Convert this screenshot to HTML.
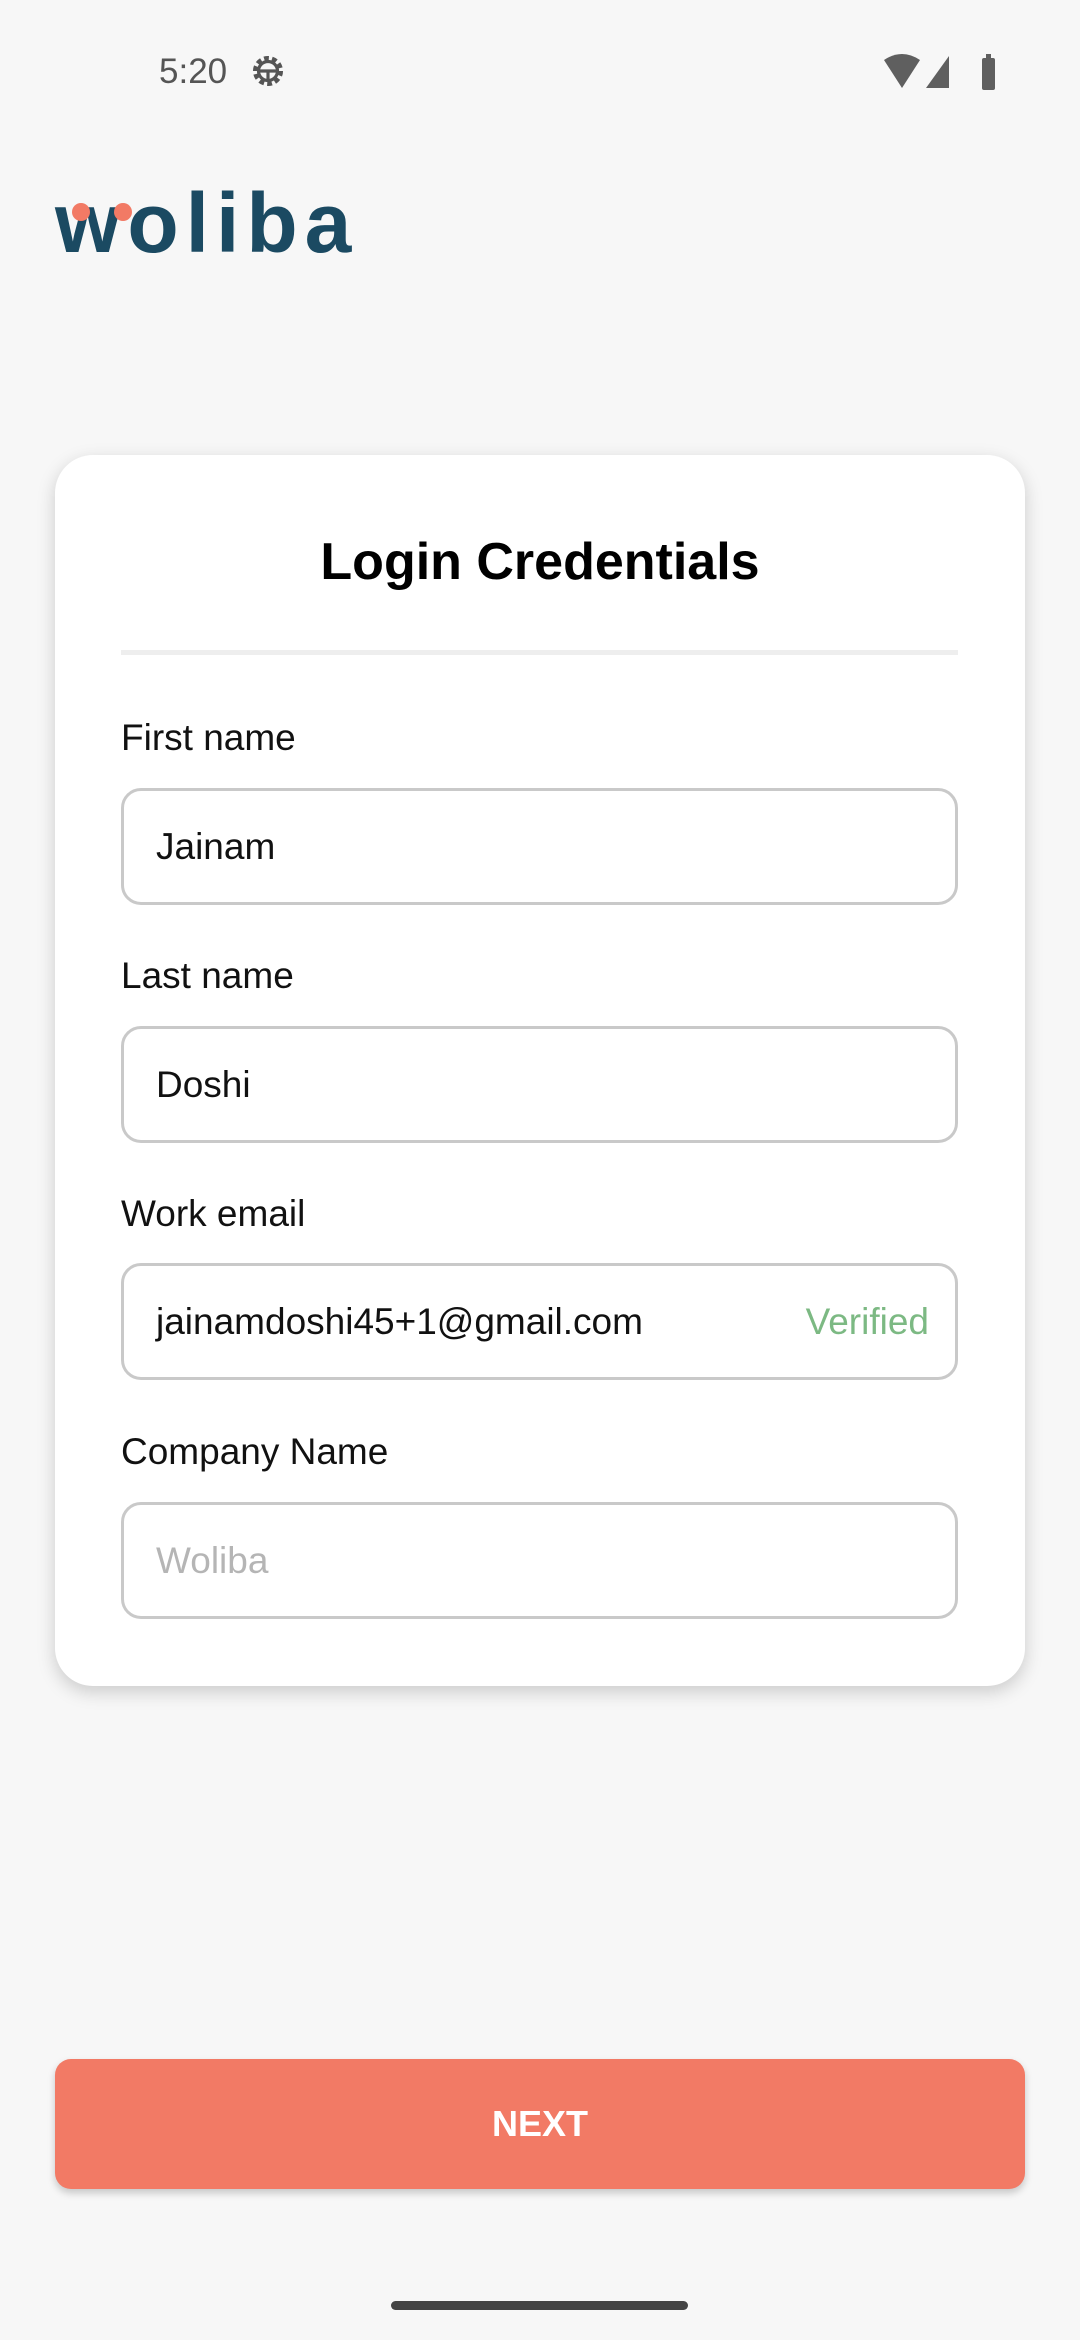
<!DOCTYPE html>
<html><head><meta charset="utf-8"><style>
*{margin:0;padding:0;box-sizing:border-box}
body{width:1080px;height:2340px;background:#f7f7f7;font-family:"Liberation Sans",Roboto,sans-serif;position:relative;overflow:hidden}
.abs{position:absolute}
.card{left:55px;top:455px;width:970px;height:1231px;background:#fff;border-radius:38px;box-shadow:0 6px 18px rgba(0,0,0,.18)}
.title{left:0;width:1080px;top:532px;text-align:center;font-size:52px;font-weight:bold;color:#000}
.div{left:121px;top:650px;width:837px;height:5px;background:#eeeeee}
.lbl{left:121px;font-size:37px;color:#111}
.inp{left:121px;width:837px;height:117px;border:3px solid #c9c9c9;border-radius:20px;font-size:37px;color:#111;padding-left:32px;line-height:111px}
.btn{left:55px;top:2059px;width:970px;height:130px;background:#f27a65;border-radius:16px;box-shadow:0 4px 8px rgba(0,0,0,.2);color:#fff;font-weight:bold;font-size:36px;text-align:center;line-height:130px}
</style></head><body>
<div class="abs" style="left:159px;top:52px;font-size:35px;color:#555">5:20</div>
<svg class="abs" style="left:249px;top:52px" width="38" height="38" viewBox="0 0 24 24"><circle cx="12" cy="12" r="8" fill="none" stroke="#555" stroke-width="3" stroke-dasharray="3 2"/><circle cx="12" cy="12" r="6" fill="none" stroke="#555" stroke-width="2"/><path d="M6 12h12M12 12v6" stroke="#555" stroke-width="2"/></svg>
<svg class="abs" style="left:882px;top:52px" width="125" height="40" viewBox="0 0 125 40"><path d="M2 8 Q20 -4 38 8 L20 36Z" fill="#5f5f5f"/><path d="M44 36 L67 4 V36Z" fill="#5f5f5f"/><rect x="100" y="6" width="13" height="32" rx="2" fill="#5f5f5f"/><rect x="104" y="2" width="5" height="5" fill="#5f5f5f"/></svg>
<div class="abs" style="left:55px;top:178px;font-size:84px;font-weight:bold;color:#1b4a62;letter-spacing:7px;line-height:90px">woliba</div>
<div class="abs" style="left:72px;top:203px;width:18px;height:18px;border-radius:50%;background:#f27a65"></div>
<div class="abs" style="left:114px;top:203px;width:18px;height:18px;border-radius:50%;background:#f27a65"></div>
<div class="abs card"></div>
<div class="abs title">Login Credentials</div>
<div class="abs div"></div>
<div class="abs lbl" style="top:717px">First name</div>
<div class="abs inp" style="top:788px">Jainam</div>
<div class="abs lbl" style="top:955px">Last name</div>
<div class="abs inp" style="top:1026px">Doshi</div>
<div class="abs lbl" style="top:1193px">Work email</div>
<div class="abs inp" style="top:1263px">jainamdoshi45+1@gmail.com<span style="position:absolute;right:26px;color:#7cb983">Verified</span></div>
<div class="abs lbl" style="top:1431px">Company Name</div>
<div class="abs inp" style="top:1502px;color:#b5b5b5">Woliba</div>
<div class="abs btn">NEXT</div>
<div class="abs" style="left:391px;top:2301px;width:297px;height:9px;border-radius:5px;background:#444"></div>
</body></html>
